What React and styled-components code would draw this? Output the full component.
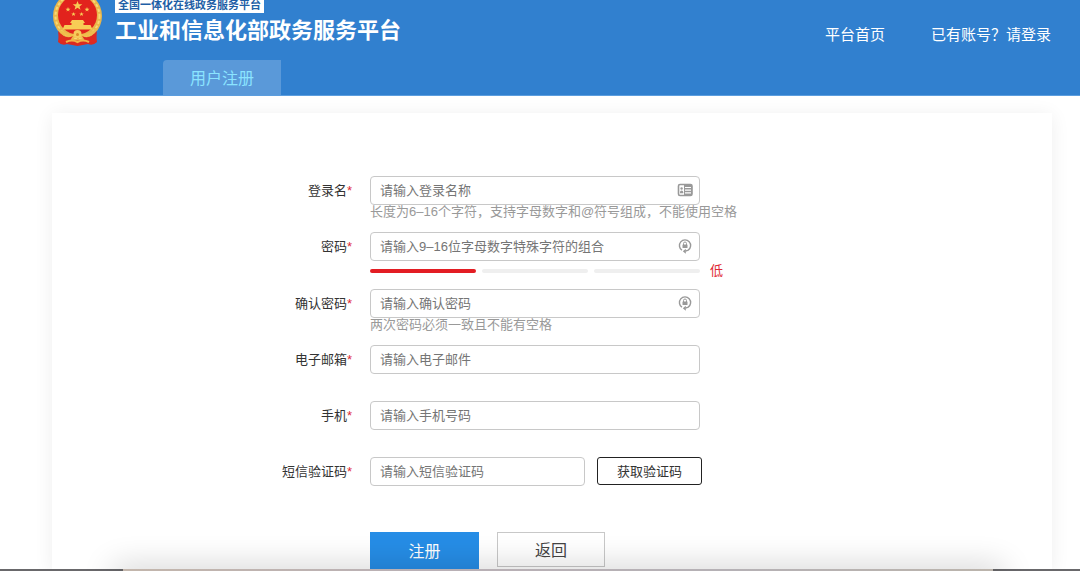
import React from "react";
import styled, { createGlobalStyle } from "styled-components";

const GlobalStyle = createGlobalStyle`
  * {
    box-sizing: border-box;
  }

  body {
    margin: 0;
    background: #fff;
    color: #333;
    font-family: "Liberation Sans", "Noto Sans CJK SC", sans-serif;
    font-size: 13px;
  }

  button,
  input {
    font-family: inherit;
  }
`;

const Page = styled.div`
  display: flex;
  flex-direction: column;
  height: 100vh;
  overflow: hidden;
`;

const Header = styled.header`
  flex: none;
  background: #3180cf;
  border-bottom: 1px solid #5c9edf;
`;

const HeaderTop = styled.div`
  display: flex;
  justify-content: space-between;
  height: 60px;
  padding: 0 29px 0 52px;
`;

const Brand = styled.div`
  display: flex;
  gap: 12px;
`;

const BrandText = styled.div`
  display: flex;
  flex-direction: column;
  align-items: flex-start;
`;

const Slogan = styled.span`
  height: 13px;
  padding: 0 3px;
  background: #fff;
  color: #1f5fa6;
  font-size: 11px;
  font-weight: bold;
  line-height: 10px;
  white-space: nowrap;
  overflow: hidden;
`;

const SiteName = styled.h1`
  margin: 0;
  color: #fff;
  font-size: 22px;
  font-weight: bold;
  line-height: 35px;
  white-space: nowrap;
`;

const Nav = styled.nav`
  display: flex;
  gap: 46px;
  padding-top: 25px;
`;

const NavLink = styled.a`
  color: #fff;
  font-size: 15px;
  line-height: 20px;
  text-decoration: none;
  white-space: nowrap;
`;

const Tabs = styled.div`
  display: flex;
  padding-left: 163px;
`;

const Tab = styled.a`
  width: 118px;
  padding-top: 2px;
  border-radius: 4px 0 0 0;
  background: #5a99d9;
  color: #8be4ff;
  font-size: 16px;
  line-height: 33px;
  text-align: center;
  text-decoration: none;
`;

const Panel = styled.main`
  flex: 1;
  margin: 17px 28px 0 52px;
  padding-top: 63px;
  background: #fff;
  box-shadow: 0 2px 18px rgba(0, 0, 0, 0.07);
`;

const Row = styled.div`
  display: grid;
  grid-template-columns: 30% 1fr;
  column-gap: 18px;
  min-height: 56px;
`;

const Label = styled.label`
  line-height: 30px;
  text-align: right;
`;

const Required = styled.span`
  color: #e02a35;
`;

const Field = styled.div`
  display: flex;
  flex-direction: column;
  align-items: flex-start;
`;

const InputBox = styled.div`
  display: flex;
  align-items: center;
  width: ${props => props.$width || 330}px;
  height: 29px;
  padding: 0 6px 1px 9px;
  border: 1px solid #c8c8c8;
  border-radius: 4px;
  background: #fff;
`;

const Input = styled.input`
  flex: 1;
  min-width: 0;
  padding: 0;
  border: 0;
  outline: 0;
  background: none;
  color: #333;
  font-size: 13px;

  &::placeholder {
    color: #757575;
    opacity: 1;
  }
`;

const Hint = styled.span`
  color: #999;
  line-height: 14px;
  white-space: nowrap;
`;

const Strength = styled.div`
  display: flex;
  align-items: center;
  gap: 10px;
  height: 17px;
  margin-bottom: 11px;
  color: #e02a35;
`;

const Bars = styled.div`
  display: grid;
  grid-template-columns: repeat(3, 106px);
  gap: 6px;
  padding-top: 3px;
`;

const Bar = styled.span`
  height: 4px;
  border-radius: 2px;
  background: ${props => (props.$active ? "#e31d23" : "#efefef")};
`;

const Inline = styled.div`
  display: flex;
  gap: 12px;
`;

const CodeButton = styled.button`
  width: 105px;
  height: 28px;
  padding: 0 0 2px;
  border: 1px solid #222;
  border-radius: 3px;
  background: #fff;
  color: #333;
  font-size: 13px;
`;

const Actions = styled.div`
  display: flex;
  align-items: flex-start;
  gap: 18px;
  padding-top: 19px;
`;

const ActionButton = styled.button`
  width: ${props => (props.$primary ? 109 : 108)}px;
  height: ${props => (props.$primary ? 37 : 35)}px;
  padding: 0 0 2px;
  border: ${props => (props.$primary ? "0" : "1px solid #c8c8c8")};
  background: ${props => (props.$primary ? "#268de6" : "#fff")};
  color: ${props => (props.$primary ? "#fff" : "#444")};
  font-size: 16px;
`;

// shadow and thin edge lying over the end of the page
const BottomEdge = styled.div`
  position: fixed;
  right: 0;
  bottom: 0;
  left: 0;
  height: 2px;
  padding: 0 87px 0 123px;
  background: #69686b;
  pointer-events: none;
`;

const BottomEdgeInner = styled.div`
  height: 2px;
  background: linear-gradient(90deg, #c3b6ac, #b9b0b5 35%, #b5b1b5 70%, #bbb4ac);
  box-shadow: 0 8px 32px 10px rgba(0, 0, 0, 0.2);
`;

const Emblem = () => (
  <svg width="51" height="47" viewBox="0 0 51 47" aria-hidden="true">
    <path d="M8 28 L43 28 L45 42 Q41 46 36 44 L25.500 46 L15 44 Q10 46 6 42Z" fill="#dc2a20" />
    <circle cx="25.500" cy="16" r="24.500" fill="#eab64a" />
    <circle cx="25.500" cy="16" r="22" fill="none" stroke="#f8d875" strokeWidth="2" strokeDasharray="3 2" />
    <circle cx="25.500" cy="15" r="19.500" fill="#e2231d" />
    <g fill="#f8cd55">
      <path d="M25.500 1 l1.300 3.200 h3.500 l-2.800 2.200 1 3.300 -3 -2 -3 2 1 -3.300 -2.800 -2.200 h3.500z" />
      <path d="M16 7 l.7 1.700 h1.800 l-1.500 1.200 .5 1.700 -1.500 -1 -1.500 1 .5 -1.700 -1.500 -1.200 h1.800z" />
      <path d="M35 7 l.7 1.700 h1.800 l-1.500 1.200 .5 1.700 -1.500 -1 -1.500 1 .5 -1.700 -1.500 -1.200 h1.800z" />
      <path d="M21.500 12 l.6 1.500 h1.600 l-1.200 1 .4 1.500 -1.400 -.9 -1.400 .9 .4 -1.500 -1.200 -1 h1.600z" />
      <path d="M29.500 12 l.6 1.500 h1.600 l-1.200 1 .4 1.500 -1.400 -.9 -1.400 .9 .4 -1.500 -1.200 -1 h1.600z" />
      <path d="M20 20 h11 l2 3 h-1.500 v2 h7 l2 4.500 H10.500 l2 -4.500 h7 v-2 H18z" />
    </g>
    <path d="M5 27 Q14 35 25.500 35 T46 27 L43 32 Q36 38 25.500 38 T8 32Z" fill="#f0bd4c" />
    <path d="M6 31 Q13 40 21 36 L17 42 Q11 44 7 41Z" fill="#e02a20" />
    <path d="M45 31 Q38 40 30 36 L34 42 Q40 44 44 41Z" fill="#e02a20" />
    <circle cx="25.500" cy="34" r="4" fill="#f6cb5b" />
    <circle cx="25.500" cy="34.500" r="1.500" fill="#dc8a2a" />
    <path d="M14 42 Q20 39 25.500 42 Q31 39 37 42" fill="none" stroke="#f2b445" strokeWidth="2" />
  </svg>
);

const CardIcon = () => (
  <svg width="16" height="14" viewBox="0 0 16 14" aria-hidden="true">
    <rect x="1.500" y="1.500" width="13.500" height="11" rx="1.500" fill="#fff" stroke="#999" strokeWidth="1.600" />
    <rect x="7" y="2" width="8" height="10" fill="#999" />
    <path d="M8 4.500h6M8 7.200h6M8 9.900h6" stroke="#fff" strokeWidth="1.200" />
    <circle cx="4.600" cy="5.500" r="1.200" fill="#999" />
    <path d="M3 10.200V9.200Q3 7.500 4.600 7.500T6.200 9.200V10.200Z" fill="#999" />
  </svg>
);

const LockIcon = () => (
  <svg width="16" height="16" viewBox="0 0 16 16" aria-hidden="true">
    <path d="M5 12.200A5.600 5.600 0 1 1 11.200 12.100L8.500 13.200" fill="none" stroke="#999" strokeWidth="1.400" />
    <path d="M8.800 10.800V15.800L5.800 13.300Z" fill="#999" />
    <path d="M6.500 7V5.500a1.500 1.500 0 0 1 3 0V7" fill="none" stroke="#999" strokeWidth="1" />
    <rect x="5.500" y="6.500" width="5" height="3.500" rx=".5" fill="#999" />
  </svg>
);

const FormRow = ({ id, label, type = "text", placeholder, icon, width, extra, children }) => (
  <Row>
    <Label htmlFor={id}>
      {label}
      <Required>*</Required>
    </Label>
    <Field>
      <Inline>
        <InputBox $width={width}>
          <Input id={id} type={type} placeholder={placeholder} />
          {icon}
        </InputBox>
        {extra}
      </Inline>
      {children}
    </Field>
  </Row>
);

const App = () => (
  <Page>
    <GlobalStyle />
    <Header>
      <HeaderTop>
        <Brand>
          <Emblem />
          <BrandText>
            <Slogan>全国一体化在线政务服务平台</Slogan>
            <SiteName>工业和信息化部政务服务平台</SiteName>
          </BrandText>
        </Brand>
        <Nav>
          <NavLink href="#home">平台首页</NavLink>
          <NavLink href="#login">已有账号？请登录</NavLink>
        </Nav>
      </HeaderTop>
      <Tabs>
        <Tab href="#register">用户注册</Tab>
      </Tabs>
    </Header>

    <Panel>
      <form onSubmit={e => e.preventDefault()}>
        <FormRow id="login" label="登录名" placeholder="请输入登录名称" icon={<CardIcon />}>
          <Hint>长度为6–16个字符，支持字母数字和@符号组成，不能使用空格</Hint>
        </FormRow>
        <FormRow
          id="password"
          label="密码"
          type="password"
          placeholder="请输入9–16位字母数字特殊字符的组合"
          icon={<LockIcon />}
        >
          <Strength>
            <Bars>
              <Bar $active />
              <Bar />
              <Bar />
            </Bars>
            低
          </Strength>
        </FormRow>
        <FormRow
          id="confirm"
          label="确认密码"
          type="password"
          placeholder="请输入确认密码"
          icon={<LockIcon />}
        >
          <Hint>两次密码必须一致且不能有空格</Hint>
        </FormRow>
        <FormRow id="email" label="电子邮箱" type="email" placeholder="请输入电子邮件" />
        <FormRow id="phone" label="手机" type="tel" placeholder="请输入手机号码" />
        <FormRow
          id="code"
          label="短信验证码"
          placeholder="请输入短信验证码"
          width={215}
          extra={<CodeButton type="button">获取验证码</CodeButton>}
        />
        <Row>
          <span />
          <Actions>
            <ActionButton $primary type="submit">
              注册
            </ActionButton>
            <ActionButton type="button">返回</ActionButton>
          </Actions>
        </Row>
      </form>
    </Panel>

    <BottomEdge>
      <BottomEdgeInner />
    </BottomEdge>
  </Page>
);

export default App;
